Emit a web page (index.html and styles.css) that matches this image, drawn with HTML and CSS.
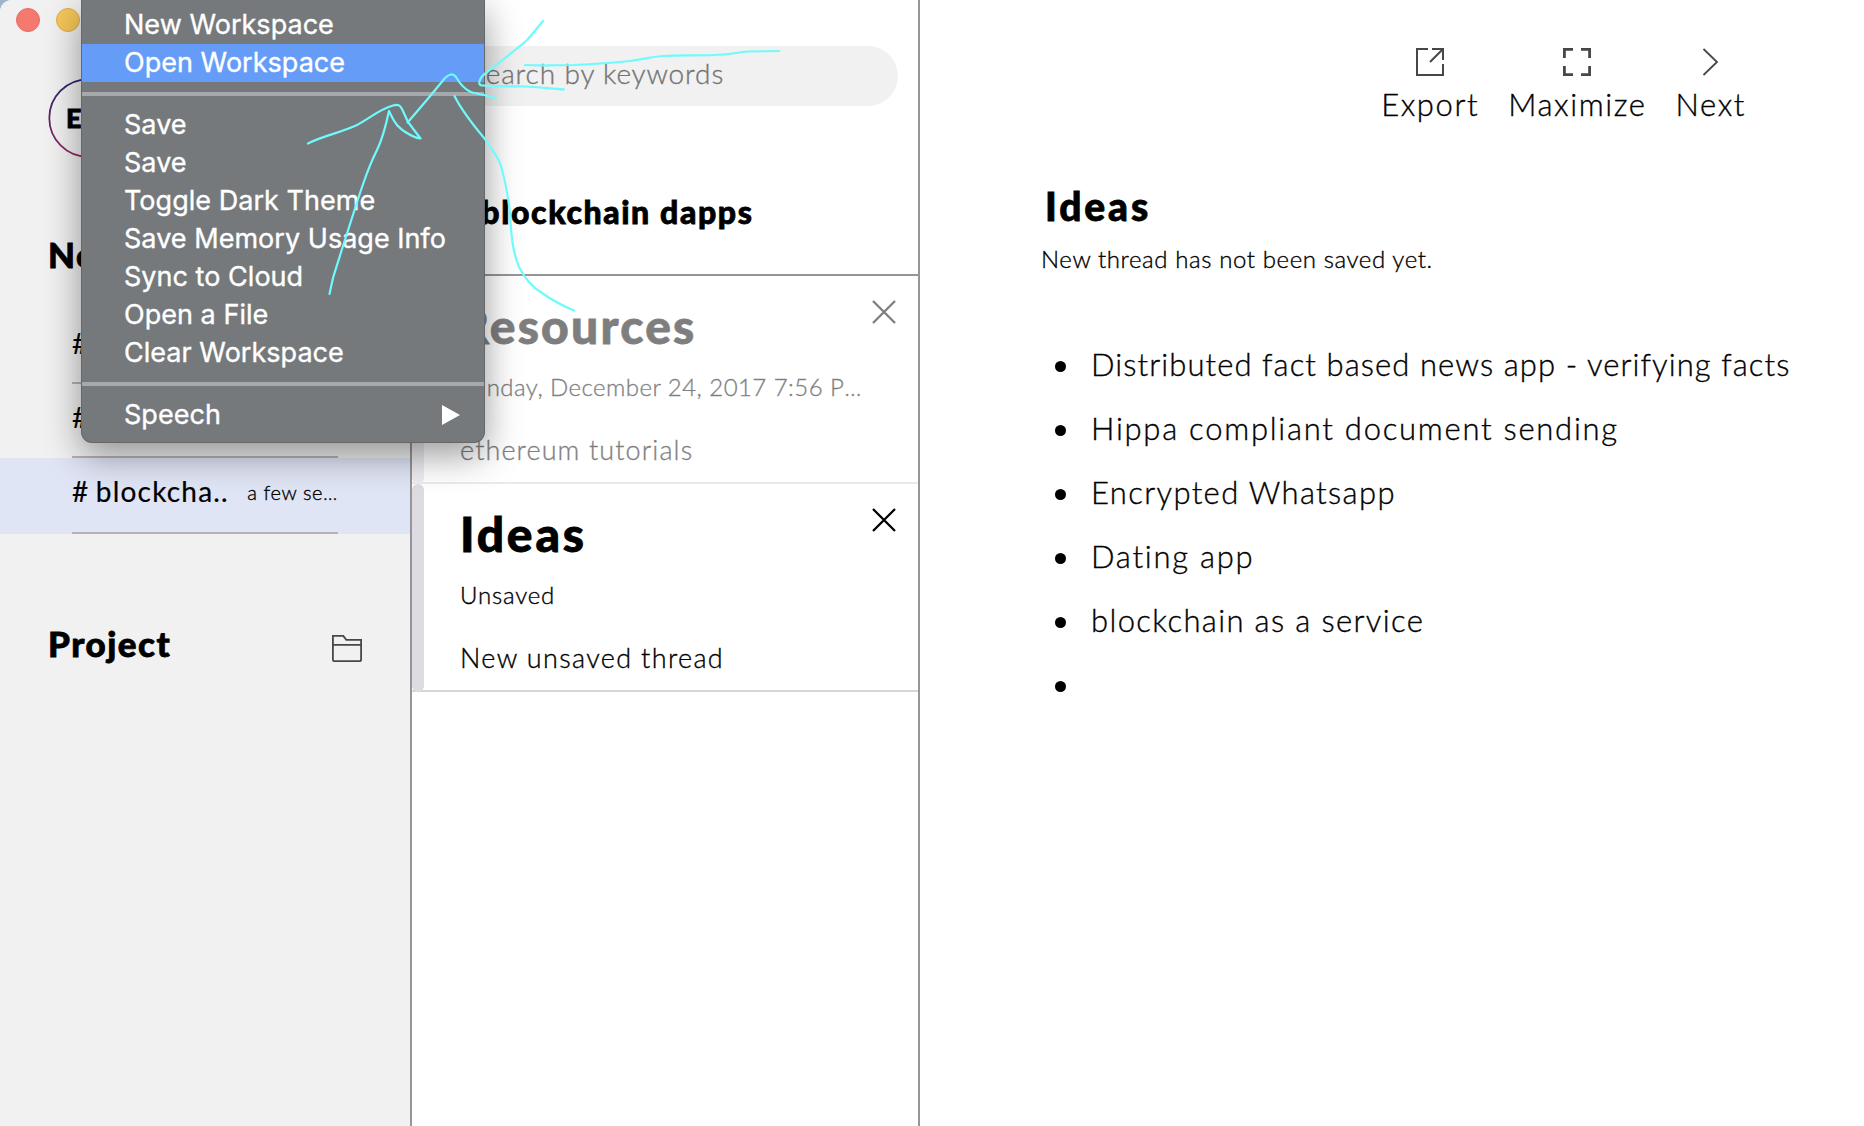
FILE: index.html
```html
<!DOCTYPE html>
<html lang="en">
<head>
<meta charset="utf-8">
<title>Notes</title>
<link rel="stylesheet" href="styles.css">
</head>
<body>
<div class="window">
  <aside class="sidebar">
    <div class="lights"><span class="light red"></span><span class="light yellow"></span></div>
    <div class="avatar">
      <svg class="ring" width="80" height="80" viewBox="0 0 80 80" fill="none">
        <defs><linearGradient id="ring" x1="0" y1="0" x2="0" y2="1"><stop offset="0" stop-color="#27246f"/><stop offset="1" stop-color="#96295f"/></linearGradient></defs>
        <circle cx="40" cy="40" r="38.7" stroke="url(#ring)" stroke-width="1.8"/>
      </svg>
      <span class="initial">E</span>
    </div>
    <h2 class="section">No</h2>
    <ul class="channels">
      <li class="channel"><div class="channel-line"><span class="channel-name">#</span></div></li>
      <li class="channel"><div class="channel-line"><span class="channel-name">#</span></div></li>
      <li class="channel active"><div class="channel-line"><span class="channel-name"># blockcha..</span><span class="channel-time">a few se<span class="dots">…</span></span></div></li>
    </ul>
    <div class="project">
      <h2 class="section project-title">Project</h2>
      <svg class="folder" width="30" height="28" viewBox="0 0 30 28" fill="none" stroke="#474747" stroke-width="1.8">
        <path d="M.9 10V.9H11.3L14.3 4.900H29.100V24.500Q29.100 26.200 27.400 26.200H2.600Q.9 26.200 .9 24.500V9.800M.9 9.800H29.100"/>
      </svg>
    </div>
  </aside>

  <section class="threads">
    <div class="search">Search by keywords</div>
    <h2 class="notebook"># blockchain dapps</h2>
    <article class="thread muted">
      <div class="thread-body">
        <h1 class="thread-title resources">Resources</h1>
        <p class="thread-date">Sunday, December 24, 2017 7:56 P<span class="dots">…</span></p>
        <p class="thread-text ethereum">ethereum tutorials</p>
      </div>
      <svg class="close" width="24" height="24" viewBox="0 0 24 24" stroke="#000" stroke-width="2.3"><path d="M1 1 23 23M23 1 1 23"/></svg>
    </article>
    <article class="thread">
      <div class="thread-body">
        <h1 class="thread-title">Ideas</h1>
        <p class="thread-date unsaved">Unsaved</p>
        <p class="thread-text">New unsaved thread</p>
      </div>
      <svg class="close" width="24" height="24" viewBox="0 0 24 24" stroke="#000" stroke-width="2.3"><path d="M1 1 23 23M23 1 1 23"/></svg>
    </article>
  </section>

  <main class="editor">
    <nav class="toolbar">
      <div class="tool">
        <svg width="28" height="28" viewBox="0 0 28 28" fill="none" stroke="#474747" stroke-width="2"><path d="M12 1H1V27H27V16M16 1H27V12M26.500 1.500 14 14"/></svg>
        <span>Export</span>
      </div>
      <div class="tool">
        <svg width="28" height="28" viewBox="0 0 28 28" fill="none" stroke="#474747" stroke-width="2.800"><path d="M10 1.400H1.400V10M18 1.400H26.600V10M10 26.600H1.400V18M18 26.600H26.600V18"/></svg>
        <span>Maximize</span>
      </div>
      <div class="tool">
        <svg width="28" height="28" viewBox="0 0 28 28" fill="none" stroke="#474747" stroke-width="1.800"><path d="M6.500 1 20 14 6.500 27"/></svg>
        <span>Next</span>
      </div>
    </nav>
    <h1 class="doc-title">Ideas</h1>
    <p class="doc-status">New thread has not been saved yet.</p>
    <ul class="ideas">
      <li><span class="idea i1">Distributed fact based news app - verifying facts</span></li>
      <li><span class="idea i2">Hippa compliant document sending</span></li>
      <li><span class="idea">Encrypted Whatsapp</span></li>
      <li><span class="idea i2">Dating app</span></li>
      <li><span class="idea">blockchain as a service</span></li>
      <li></li>
    </ul>
  </main>
</div>

<div class="menu">
  <div class="item">New Workspace</div>
  <div class="item selected">Open Workspace</div>
  <div class="rule"></div>
  <div class="item">Save</div>
  <div class="item">Save</div>
  <div class="item">Toggle Dark Theme</div>
  <div class="item">Save Memory Usage Info</div>
  <div class="item">Sync to Cloud</div>
  <div class="item">Open a File</div>
  <div class="item">Clear Workspace</div>
  <div class="rule"></div>
  <div class="item submenu">Speech<svg width="18" height="20" viewBox="0 0 18 20"><path d="M0 0 18 10 0 20Z" fill="#fff"/></svg></div>
</div>

<svg class="marks" width="800" height="330" viewBox="0 0 800 330" fill="none" stroke="#6ffafd" stroke-width="2.200" stroke-linecap="round" stroke-linejoin="round">
  <path d="M308 143.500C322 136 340 133 357 125C372 117 378 110 393 105.500C398 104 400 105 402 109L408 122L420.500 138.500C414 138 402 131 397 125C393 120 391 115 389 111C386 125 382 140 377 150C368 168 366 176 360 193C352 218 340 255 333 278L329.500 294"/>
  <path d="M407.500 122.500C422 106 432 94 445 78C449 74 453 73 456 77C460 84 464 89 471 92C480 95 490 95 496 98.500"/>
  <path d="M454.500 96C462 111 474 126 484.500 138.500C490 147 498 156 501 166C505 180 508 195 510 213C511 232 512 250 519 267C524 277 532 287 542 293C552 300 563 306 574 310.500"/>
  <path d="M543 21C537 28 532 35 526 41C513 52 500 62 486 73C480 77 476 86 483 85.500C497 87 509 86 524 86.500C540 87 552 89 564 89.500"/>
  <path d="M525 65C542 66 556 65 573 65C597 64 612 63 630 61C645 59 650 57 662 56C682 55 705 56 724 54.500C732 54 740 52 748 51.500L779 51"/>
</svg>
</body>
</html>
```
FILE: styles.css
```css
* { box-sizing: border-box; }
body { margin: 0; background: #9fb4cc; font-family: Lato, "Open Sans", sans-serif; font-weight: 300; -webkit-text-stroke: .35px; color: #000; overflow: hidden; }
h1, h2, p, ul { margin: 0; padding: 0; }
ul { list-style: none; }
h1, h2 { font-weight: 900; white-space: nowrap; -webkit-text-stroke: .8px; }
svg { display: block; flex: none; }
.dots { font-family: "Open Sans", sans-serif; line-height: 1; }

.window { display: flex; width: 1864px; height: 1126px; background: #fff; border-top-left-radius: 12px; overflow: hidden; }

/* Left sidebar */
.sidebar { flex: none; width: 412px; border-right: 2px solid #969696; background: #f1f1f1; }
.lights { display: flex; gap: 16px; padding: 8px 0 0 16px; }
.light { width: 24px; height: 24px; border-radius: 50%; border: 1px solid #e36c64; background: #f5796f; }
.light.yellow { border-color: #dfae4a; background: #f6c65a; }
.avatar { display: grid; place-items: center; width: 80px; height: 80px; margin: 46px 0 0 48px; }
.avatar > * { grid-area: 1 / 1; }
.initial { font-size: 27px; font-weight: 900; line-height: 40px; justify-self: start; padding-left: 18px; -webkit-text-stroke: .8px; }
.section { font-size: 35px; line-height: 42px; letter-spacing: 1.5px; padding-left: 48px; }
.sidebar > .section { margin-top: 75px; }
.channels { margin-top: 35px; }
.channel { padding: 0 72px; height: 74px; }
.channel.active { height: 76px; background: #e0e5f5; }
.channel-line { display: flex; height: 100%; border-bottom: 2px solid #b5b1b8; align-items: flex-start; justify-content: space-between; white-space: nowrap; }
.channel-name { font-size: 28px; font-weight: 400; line-height: 66px; letter-spacing: 1.2px; word-spacing: -2px; -webkit-text-stroke: .2px; }
.channel-time { font-size: 20px; line-height: 69px; letter-spacing: .6px; }
.project { display: flex; justify-content: space-between; margin-top: 88px; padding-right: 48px; }
.folder { margin-top: 13px; }

/* Thread list */
.threads { flex: none; width: 508px; border-right: 2px solid #969696; }
.search { height: 60px; margin: 46px 20px 0 40px; padding-left: 18px; border-radius: 30px; background: #f1f1f1; color: #757575; font-size: 28px; line-height: 55px; letter-spacing: .87px; }
.notebook { height: 170px; padding: 87px 0 0 40px; border-bottom: 2px solid #969696; font-size: 32px; line-height: 38px; letter-spacing: 1.6px; }
.thread { display: flex; justify-content: space-between; height: 208px; padding-right: 22px; border-bottom: 2px solid #d6d6d6; }
.thread::before { content: ""; flex: none; width: 12px; height: 208px; border-radius: 6px; background: #dedbe3; }
.muted { opacity: .5; }
.thread-body { flex: 1; padding-left: 36px; white-space: nowrap; }
.thread-title { padding-top: 20px; font-size: 48px; line-height: 60px; letter-spacing: 2.8px; }
.resources { letter-spacing: 2.2px; margin-left: -2px; }
.thread-date { height: 30px; margin-top: 16px; font-size: 24px; line-height: 30px; letter-spacing: .45px; }
.unsaved { letter-spacing: .8px; }
.thread-text { margin-top: 31px; font-size: 27px; line-height: 34px; letter-spacing: 1.35px; }
.ethereum { letter-spacing: 1.1px; }
.close { margin-top: 24px; }

/* Editor */
.editor { flex: 1; padding: 48px 0 0 121px; }
.toolbar { display: flex; justify-content: flex-end; gap: 29px; padding-right: 118px; }
.tool { display: flex; flex-direction: column; align-items: center; font-size: 31px; line-height: 38px; letter-spacing: 1.6px; }
.tool span { margin-top: 9px; }
.doc-title { margin-top: 59px; padding-left: 4px; font-size: 39px; line-height: 48px; letter-spacing: 2.9px; }
.doc-status { margin-top: 14px; font-size: 24px; line-height: 30px; letter-spacing: .6px; }
.ideas { margin-top: 58px; }
.ideas li { display: flex; align-items: center; height: 64px; padding-left: 14px; }
.ideas li::before { content: ""; flex: none; width: 11px; height: 11px; margin-top: 4px; border-radius: 50%; background: #000; }
.idea { margin-left: 25px; font-size: 31px; line-height: 58px; letter-spacing: 1.36px; white-space: nowrap; }
.i1 { letter-spacing: 1.08px; }
.i2 { letter-spacing: 1.74px; }

/* Dropdown menu over the window */
.menu { position: absolute; top: 0; left: 81px; width: 404px; height: 443px; padding-top: 6px; border: 1px solid #64686b; border-top: 0; border-radius: 0 0 11px 11px; background: #75797c; box-shadow: 0 12px 36px rgba(0, 0, 0, .4); color: #fff; font-family: Inter, Roboto, sans-serif; font-weight: 400; }
.item { height: 38px; padding-left: 42px; font-size: 27px; line-height: 37px; letter-spacing: .03px; white-space: nowrap; }
.selected { background: #659cf8; }
.rule { height: 4px; margin: 10px 0; background: #a6a9ac; }
.submenu { display: flex; justify-content: space-between; padding-right: 24px; }
.submenu svg { margin-top: 8.500px; }

/* Hand-drawn pen marks over everything */
.marks { position: absolute; top: 0; left: 0; }
```
